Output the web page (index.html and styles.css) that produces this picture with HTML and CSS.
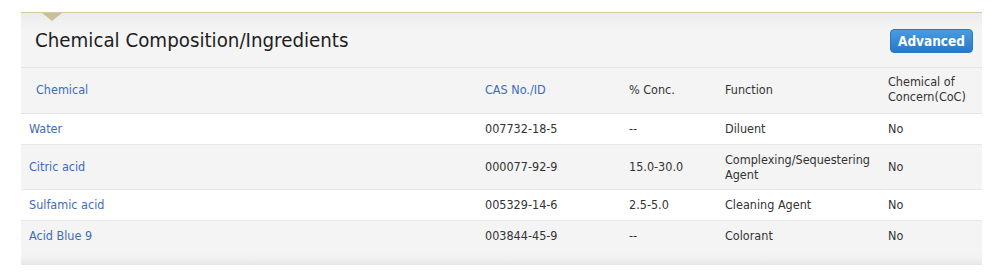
FILE: index.html
```html
<!DOCTYPE html>
<html>
<head>
<meta charset="utf-8">
<link rel="stylesheet" href="styles.css">
</head>
<body>
<div class="panel">
  <div class="notch"></div>
  <div class="panel-head">
    <h2 class="title">Chemical Composition/Ingredients</h2>
    <button class="btn">Advanced</button>
  </div>
  <table class="grid">
    <colgroup>
      <col class="c1"><col class="c2"><col class="c3"><col class="c4"><col class="c5">
    </colgroup>
    <thead>
      <tr>
        <th class="link first">Chemical</th>
        <th class="link">CAS No./ID</th>
        <th>% Conc.</th>
        <th>Function</th>
        <th>Chemical of Concern(CoC)</th>
      </tr>
    </thead>
    <tbody>
      <tr class="white">
        <td class="link">Water</td><td>007732-18-5</td><td>--</td><td>Diluent</td><td>No</td>
      </tr>
      <tr class="gray tall">
        <td class="link">Citric acid</td><td>000077-92-9</td><td>15.0-30.0</td><td>Complexing/Sequestering Agent</td><td>No</td>
      </tr>
      <tr class="white">
        <td class="link">Sulfamic acid</td><td>005329-14-6</td><td>2.5-5.0</td><td>Cleaning Agent</td><td>No</td>
      </tr>
      <tr class="gray">
        <td class="link">Acid Blue 9</td><td>003844-45-9</td><td>--</td><td>Colorant</td><td>No</td>
      </tr>
    </tbody>
  </table>
  <div class="panel-foot"></div>
</div>
</body>
</html>
```

FILE: styles.css
```css
html, body {
  margin: 0;
  padding: 0;
  background: #ffffff;
}
body {
  padding: 12px 18px 0 21px;
  font-family: "DejaVu Sans Condensed", "DejaVu Sans", sans-serif;
  font-size: 12.5px;
  color: #333333;
}
.panel {
  position: relative;
  width: 961px;
  border-top: 1px solid #d6c9a3;
  background: #f4f4f4;
}
.notch {
  position: absolute;
  left: 21px;
  top: 0;
  width: 0;
  height: 0;
  border-left: 10px solid transparent;
  border-right: 10px solid transparent;
  border-top: 8px solid #cbbf9a;
}
.panel-head {
  display: flex;
  align-items: center;
  justify-content: space-between;
  height: 54px;
  padding: 0 9px 0 14px;
  background: linear-gradient(#ececec, #f4f4f4 30%, #f4f4f4);
  border-bottom: 1px solid #e4e4e4;
}
.title {
  margin: 0;
  font-weight: normal;
  font-size: 20.3px;
  color: #1e1e1e;
}
.btn {
  width: 83px;
  height: 24px;
  border: 1px solid #2a78c6;
  border-radius: 4px;
  background: linear-gradient(#4a9be0, #2679cb);
  color: #ffffff;
  font-family: inherit;
  font-weight: bold;
  font-size: 13.5px;
  padding: 0;
  margin-top: 1px;
}
.grid {
  width: 961px;
  border-collapse: collapse;
  table-layout: fixed;
}
.c1 { width: 456px; }
.c2 { width: 144px; }
.c3 { width: 96px; }
.c4 { width: 163px; }
.c5 { width: 102px; }
th, td {
  text-align: left;
  font-weight: normal;
  padding: 7px 8px 8px 8px;
  line-height: 15px;
  vertical-align: middle;
}
thead tr {
  background: #f4f4f4;
  height: 45px;
}
thead th {
  padding-top: 6px;
  padding-bottom: 8px;
  border-bottom: 1px solid #e4e4e4;
}
th.first {
  padding-left: 15px;
}
.link {
  color: #3d6cbc;
}
tbody td {
  border-bottom: 1px solid #e8e8e8;
}
tbody tr.tall td {
  padding-bottom: 7px;
}
tbody tr:last-child td {
  border-bottom: none;
}
tr.white { background: #ffffff; }
tr.gray { background: #f4f4f4; }
.panel-foot {
  height: 14px;
  background: linear-gradient(#f4f4f4, #f2f2f2 50%, #e6e6e6);
}
```
